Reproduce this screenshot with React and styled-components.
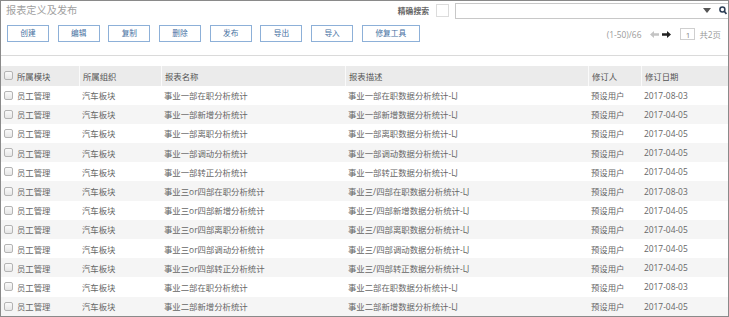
import React from "react";
import styled, { createGlobalStyle } from "styled-components";

const Global = createGlobalStyle`
  html, body { margin: 0; padding: 0; background: #fff; }
  body { font-family: "Open Sans", "Noto Sans CJK SC", sans-serif; }
`;

const Frame = styled.div`
  width: 729px;
  height: 317px;
  box-sizing: border-box;
  border: 1px solid #8a8a8a;
  overflow: hidden;
  display: flex;
  flex-direction: column;
  background: #fff;
  font-family: "Open Sans", "Noto Sans CJK SC", sans-serif;
`;

const TopBar = styled.div`
  height: 18px;
  display: flex;
  align-items: center;
`;

const Title = styled.div`
  padding-left: 5px;
  font-size: 10.2px;
  color: #a0a0a0;
  line-height: 18px;
`;

const SearchGroup = styled.div`
  margin-left: auto;
  display: flex;
  align-items: center;
  height: 18px;
`;

const SearchLabel = styled.span`
  font-size: 7.8px;
  font-weight: 700;
  color: #666;
  margin-right: 7px;
`;

const BigCheck = styled.span`
  width: 11px;
  height: 11px;
  border: 1px solid #dcdcdc;
  background: #fff;
  margin-right: 6px;
`;

const SearchBox = styled.div`
  width: 273px;
  height: 16px;
  box-sizing: border-box;
  border: 1px solid #c8c8c8;
  border-right: none;
  display: flex;
  align-items: center;
  justify-content: flex-end;
  gap: 8px;
  padding-right: 1px;
  margin-top: 1px;
`;

const Toolbar = styled.div`
  margin-top: 6px;
  height: 17px;
  display: flex;
  align-items: center;
  padding-left: 6px;
`;

const Buttons = styled.div`
  display: flex;
  gap: 8.7px;
`;

const Btn = styled.button`
  width: ${(p) => p.$w || 42}px;
  height: 17px;
  box-sizing: border-box;
  border: 1px solid #8db0d8;
  background: #fff;
  color: #45709f;
  font-family: "Open Sans", "Noto Sans CJK SC", sans-serif;
  font-size: 7.7px;
  padding: 0;
  line-height: 15px;
`;

const Pager = styled.div`
  margin-left: auto;
  display: flex;
  align-items: center;
  padding-right: 7px;
  font-size: 8.4px;
  color: #9a9a9a;
  margin-top: 1px;
`;

const PageInfo = styled.span`
  margin-right: 9px;
`;

const Arrows = styled.span`
  display: flex;
  align-items: center;
  gap: 3px;
  margin-right: 9px;
`;

const PageInput = styled.span`
  width: 15px;
  height: 12px;
  box-sizing: border-box;
  border: 1px solid #cfcfcf;
  color: #888;
  font-size: 8px;
  display: flex;
  align-items: center;
  justify-content: center;
  margin-right: 4px;
`;

const Separator = styled.div`
  margin-top: 13px;
  height: 1px;
  background: #dadada;
`;

const Table = styled.div`
  margin-top: 10px;
  display: grid;
  grid-template-columns: 13px 65px 82px 184px 243px 53px 1fr;
  grid-auto-rows: 19.2px;
  grid-template-rows: 19.5px;
  font-size: 8.4px;
`;

const Row = styled.div`
  display: contents;
`;

const Cell = styled.div`
  display: flex;
  align-items: center;
  padding-left: ${(p) => (p.$cb ? 3 : 3)}px;
  white-space: nowrap;
  overflow: hidden;
  background: ${(p) => (p.$head ? "#ebebeb" : p.$alt ? "#f5f5f5" : "#fff")};
  color: ${(p) => (p.$head ? "#555" : "#666")};
  border-left: ${(p) => (p.$head && p.$sep ? "1px solid #fafafa" : "none")};
  box-sizing: border-box;
`;

const Check = styled.span`
  width: 9px;
  height: 9px;
  box-sizing: border-box;
  border: 1px solid #b4b4b4;
  border-radius: 2px;
  background: linear-gradient(#fafafa, #e6e6e6);
`;

const ArrowIcon = ({ dir, color }) => (
  <svg width="9" height="7" viewBox="0 0 9 7">
    <g transform={dir === "left" ? "" : "translate(9,0) scale(-1,1)"}>
      <polygon points="0,3.5 4,0 4,2.3 9,2.3 9,4.7 4,4.7 4,7" fill={color} />
    </g>
  </svg>
);

const rows = [
  ["事业一部在职分析统计", "事业一部在职数据分析统计-LJ", "2017-08-03"],
  ["事业一部新增分析统计", "事业一部新增数据分析统计-LJ", "2017-04-05"],
  ["事业一部离职分析统计", "事业一部离职数据分析统计-LJ", "2017-04-05"],
  ["事业一部调动分析统计", "事业一部调动数据分析统计-LJ", "2017-04-05"],
  ["事业一部转正分析统计", "事业一部转正数据分析统计-LJ", "2017-04-05"],
  ["事业三or四部在职分析统计", "事业三/四部在职数据分析统计-LJ", "2017-08-03"],
  ["事业三or四部新增分析统计", "事业三/四部新增数据分析统计-LJ", "2017-04-05"],
  ["事业三or四部离职分析统计", "事业三/四部离职数据分析统计-LJ", "2017-04-05"],
  ["事业三or四部调动分析统计", "事业三/四部调动数据分析统计-LJ", "2017-04-05"],
  ["事业三or四部转正分析统计", "事业三/四部转正数据分析统计-LJ", "2017-04-05"],
  ["事业二部在职分析统计", "事业二部在职数据分析统计-LJ", "2017-08-03"],
  ["事业二部新增分析统计", "事业二部新增数据分析统计-LJ", "2017-04-05"],
];

const headers = ["所属模块", "所属组织", "报表名称", "报表描述", "修订人", "修订日期"];

export default function App() {
  return (
    <>
      <Global />
      <Frame>
        <TopBar>
          <Title>报表定义及发布</Title>
          <SearchGroup>
            <SearchLabel>精确搜索</SearchLabel>
            <BigCheck />
            <SearchBox>
              <svg width="8" height="5" viewBox="0 0 8 5">
                <polygon points="0,0 8,0 4,5" fill="#555" />
              </svg>
              <svg width="8" height="9" viewBox="0 0 8 9">
                <circle cx="3.4" cy="3.4" r="2.5" fill="none" stroke="#2c3e55" strokeWidth="1.5" />
                <line x1="5.2" y1="5.2" x2="7.5" y2="8" stroke="#2c3e55" strokeWidth="1.8" />
              </svg>
            </SearchBox>
          </SearchGroup>
        </TopBar>
        <Toolbar>
          <Buttons>
            <Btn>创建</Btn>
            <Btn>编辑</Btn>
            <Btn>复制</Btn>
            <Btn>删除</Btn>
            <Btn>发布</Btn>
            <Btn>导出</Btn>
            <Btn>导入</Btn>
            <Btn $w={58}>修复工具</Btn>
          </Buttons>
          <Pager>
            <PageInfo>(1-50)/66</PageInfo>
            <Arrows>
              <ArrowIcon dir="left" color="#c4c4c4" />
              <ArrowIcon dir="right" color="#222" />
            </Arrows>
            <PageInput>1</PageInput>
            <span>共2页</span>
          </Pager>
        </Toolbar>
        <Separator />
        <Table>
          <Row>
            <Cell $head>
              <Check />
            </Cell>
            {headers.map((h, i) => (
              <Cell key={h} $head $sep={i > 0}>
                {h}
              </Cell>
            ))}
          </Row>
          {rows.map((r, i) => {
            const alt = i % 2 === 1;
            return (
              <Row key={i}>
                <Cell $alt={alt}>
                  <Check />
                </Cell>
                <Cell $alt={alt}>员工管理</Cell>
                <Cell $alt={alt}>汽车板块</Cell>
                <Cell $alt={alt}>{r[0]}</Cell>
                <Cell $alt={alt}>{r[1]}</Cell>
                <Cell $alt={alt}>预设用户</Cell>
                <Cell $alt={alt}>{r[2]}</Cell>
              </Row>
            );
          })}
        </Table>
      </Frame>
    </>
  );
}
